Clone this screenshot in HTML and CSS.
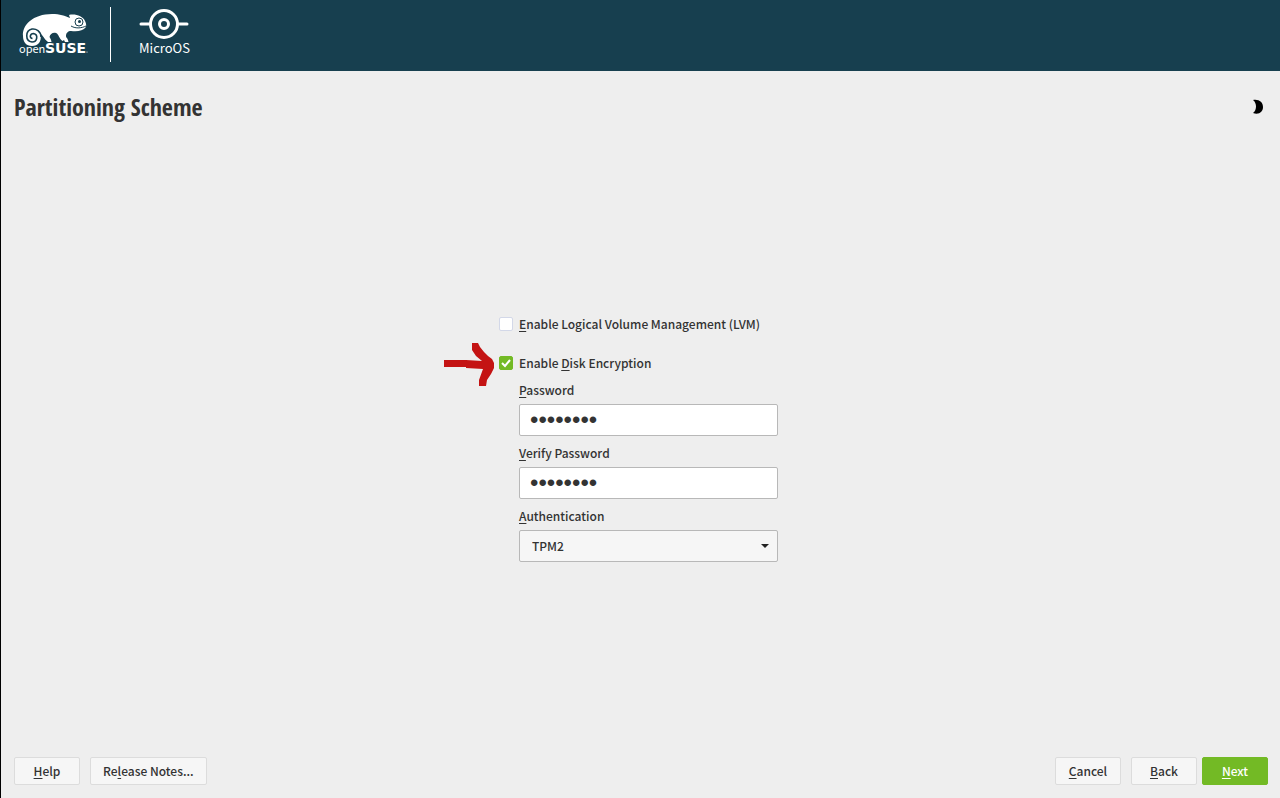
FILE: index.html
```html
<!DOCTYPE html>
<html lang="en">
<head>
<meta charset="UTF-8">
<meta name="viewport" content="width=device-width, initial-scale=1.0">
<title>Partitioning Scheme</title>
<link rel="stylesheet" href="styles.css">
</head>
<body>

<header class="banner">
  <svg class="logo" width="72" height="48" viewBox="18 10 72 48" role="img" aria-label="openSUSE">
    <path fill="#fff" d="M23 35C22 24 33 13 52 13C60 13 65 15 70 17L69 14C75 12.500 83 15 85 20C86 22 86.500 24 86 26C83 30 77 31 71 30C68 30 66 32 66 35C66 37 68 37 68.500 41L65 41L64 39L62.500 40C59 38 59 33 56 32C53 31 50 33 49.500 36C50 37 51 38 51.500 41L48 41C44 38 43 34 40.500 33C42 41 38 45 32 45C26 45 23 41 23 35Z"/>
    <path class="line" d="M41 36C41 30 36 27.500 32 28C25 29.500 25 40 32 41C37.500 41 38.500 33.500 33.500 32.500C30 32.500 29 37 32.500 37.500" stroke-width="1.600"/>
    <circle class="line" cx="79" cy="21" r="4" stroke-width="1"/>
    <circle cx="79.500" cy="20.500" r="1.500" fill="#173f4f"/>
    <path class="line" d="M71 25C76 28 82 27 86 25" stroke-width="1"/>
    <text class="logo-open" x="19" y="52">open</text>
    <text class="logo-suse" x="45" y="52">SUSE</text>
    <circle cx="87" cy="51" r="0.600" fill="#fff"/>
  </svg>
  <div class="product">
    <svg width="50" height="32" viewBox="0 0 50 32" aria-hidden="true">
      <g fill="none" stroke="#fff" stroke-width="3">
        <circle cx="25" cy="17" r="13.500"/>
        <circle cx="25" cy="17" r="4.500"/>
        <path d="M2 17H11M39 17H48" stroke-linecap="round"/>
      </g>
    </svg>
    <span>MicroOS</span>
  </div>
</header>

<div class="title-bar">
  <h1>Partitioning Scheme</h1>
  <button class="theme-btn" type="button" aria-label="Switch theme">
    <svg width="12" height="16" viewBox="0 0 12 16"><path d="M1 1C7 0 11 3 11 8C11 13 7 16 1 14C5 11 5 4 1 1Z"/></svg>
  </button>
</div>

<main class="content">
  <form class="scheme" id="scheme">
    <div class="check-row">
      <input type="checkbox" id="lvm">
      <label for="lvm"><u>E</u>nable Logical Volume Management (LVM)</label>
    </div>
    <div class="check-row">
      <svg class="arrow" width="52" height="44" viewBox="0 0 52 44" aria-hidden="true">
        <path d="M1 18H23L39 19L33 14L29 8V1H35L37 5L41 10L45 14L49 17L51 21V26L48 32L44 38L43 44H36V38L40 27L23 26V25H1Z"/>
      </svg>
      <input type="checkbox" id="encrypt" checked>
      <label for="encrypt">Enable <u>D</u>isk Encryption</label>
    </div>
    <div class="field">
      <label for="password"><u>P</u>assword</label>
      <input type="password" id="password" value="password">
    </div>
    <div class="field">
      <label for="verify"><u>V</u>erify Password</label>
      <input type="password" id="verify" value="password">
    </div>
    <div class="field">
      <label for="auth"><u>A</u>uthentication</label>
      <div class="select-wrap">
        <select id="auth">
          <option>TPM2</option>
        </select>
        <svg width="8" height="4" viewBox="0 0 8 4" aria-hidden="true"><path d="M0 0H8L4 4Z"/></svg>
      </div>
    </div>
  </form>
</main>

<footer class="actions">
  <button class="btn" type="button"><u>H</u>elp</button>
  <button class="btn" type="button">Re<u>l</u>ease Notes...</button>
  <button class="btn cancel" type="button"><u>C</u>ancel</button>
  <button class="btn" type="button"><u>B</u>ack</button>
  <button class="btn next" type="submit" form="scheme"><u>N</u>ext</button>
</footer>

</body>
</html>
```
FILE: styles.css
```css
* {
  box-sizing: border-box;
}
body {
  display: flex;
  flex-direction: column;
  min-height: 100vh;
  margin: 0;
  border-left: 1px solid #000;
  background-color: #eee;
  color: #333;
  font: 500 12px/20px "Noto Sans CJK SC", "Noto Sans", sans-serif;
}
u {
  text-underline-offset: 2px;
  text-decoration-thickness: 1px;
  text-decoration-skip-ink: none;
}
button, input, select {
  font: inherit;
  color: inherit;
}

/* Top banner */
.banner {
  display: flex;
  align-items: center;
  height: 71px;
  padding: 0 17px 2px;
  background-color: #173f4f;
  color: #fff;
}
.logo {
  margin-right: 20px;
}
.line {
  fill: none;
  stroke: #173f4f;
}
.logo-open {
  fill: #fff;
  font: 400 11px "Noto Sans CJK SC", sans-serif;
}
.logo-suse {
  fill: #fff;
  font: bold 14px "DejaVu Sans", sans-serif;
}
.product {
  display: flex;
  flex-direction: column;
  align-items: center;
  height: 55px;
  padding-left: 28px;
  border-left: 1px solid #fff;
  font-size: 13px;
  font-weight: 400;
  line-height: 18px;
}

/* Page title */
.title-bar {
  display: flex;
  align-items: center;
  justify-content: space-between;
  padding: 18px 16px 0 13px;
}
h1 {
  margin: 0;
  font: bold 24px/36px "Open Sans Condensed", "Noto Sans CJK SC", sans-serif;
}
.theme-btn {
  display: flex;
  padding: 0;
  border: none;
  background: none;
  cursor: pointer;
}

/* Form */
.content {
  display: flex;
  flex: 1;
  align-items: center;
  justify-content: center;
  padding-right: 4px;
}
.scheme {
  width: 279px;
}
.check-row {
  position: relative;
  display: flex;
  align-items: center;
  gap: 6px;
  margin-bottom: 19px;
}
.check-row input {
  appearance: none;
  width: 14px;
  height: 14px;
  margin: 0;
  border: 1px solid #d3d8e8;
  border-radius: 2px;
  background-color: #fff;
}
.check-row input:checked {
  border-color: #73ba25;
  background: #73ba25 url("data:image/svg+xml,%3Csvg xmlns='http://www.w3.org/2000/svg' viewBox='0 0 12 12'%3E%3Cpath d='M2 6l3 3 5-6' fill='none' stroke='white' stroke-width='2'/%3E%3C/svg%3E");
}
.arrow {
  position: absolute;
  right: 100%;
  top: -11px;
  margin-right: 4px;
  fill: #c41313;
}
.field {
  display: flex;
  flex-direction: column;
  gap: 4px;
  margin: 7px 0 0 20px;
}
.check-row + .field {
  margin-top: -12px;
}
.field input, .field select {
  width: 100%;
  height: 32px;
  padding: 0 12px;
  border: 1px solid #b8b8b8;
  border-radius: 2px;
  background-color: #fff;
}
.field input {
  padding: 0 10px;
  font: 24px "Liberation Sans", sans-serif;
}
.field select {
  appearance: none;
  background-color: #f6f6f6;
}
.select-wrap {
  position: relative;
}
.select-wrap svg {
  position: absolute;
  right: 9px;
  top: 14px;
  fill: #222;
  pointer-events: none;
}

/* Bottom buttons */
.actions {
  display: flex;
  gap: 10px;
  padding: 6px 12px 13px 13px;
}
.btn {
  min-width: 66px;
  height: 28px;
  padding: 0 12px;
  border: 1px solid #dcdcdc;
  border-radius: 2px;
  background-color: #f6f6f6;
  line-height: 20px;
  cursor: pointer;
}
.cancel {
  margin-left: auto;
}
.next {
  margin-left: -5px;
  border-color: #73ba25;
  background-color: #73ba25;
  color: #fff;
}
```
